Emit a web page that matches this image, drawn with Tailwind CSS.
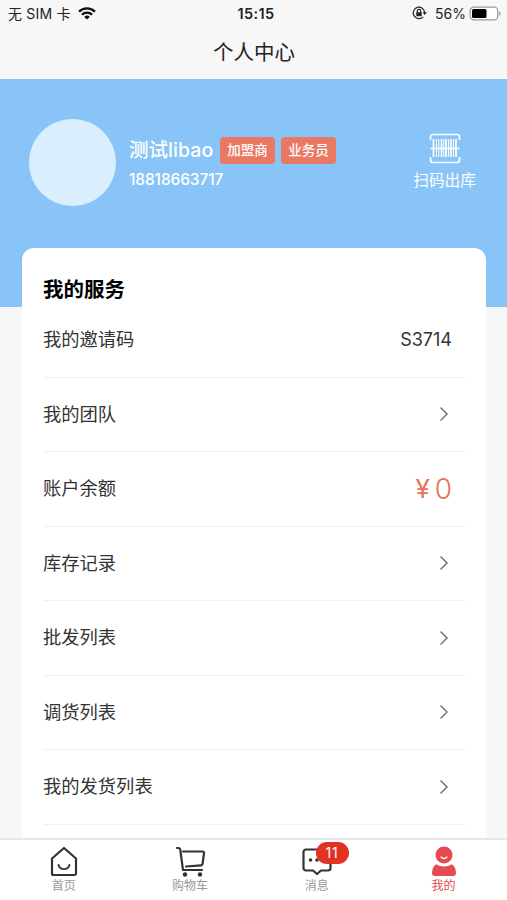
<!DOCTYPE html>
<html lang="zh-CN">
<head>
<meta charset="utf-8">
<meta name="viewport" content="width=device-width, initial-scale=1">
<title>个人中心</title>
<script src="https://cdn.jsdelivr.net/npm/@tailwindcss/browser@4"></script>
</head>
<body class="font-['Inter','Noto_Sans_CJK_SC',sans-serif] bg-[#f7f7f7] text-[#333]">
<div class="w-[507px] h-[900px] overflow-hidden flex flex-col">
  <!-- status bar -->
  <div class="h-7 shrink-0 grid grid-cols-3 items-center pl-2 pr-[5px] text-[14px] leading-7 text-[#222]">
    <div class="flex items-center gap-[7px] whitespace-nowrap">
      <span class="tracking-[0.2px]">无 SIM 卡</span>
      <svg class="w-[18px] h-[13px] -mt-[2px]" viewBox="0 0 18 13" fill="none" stroke="#111" stroke-width="2.3"><path d="M1 4.6a11.5 11.5 0 0 1 16 0M3.9 7.7a7.3 7.3 0 0 1 10.2 0"/><path d="M9 12.6 6.2 9.9a4 4 0 0 1 5.6 0z" fill="#111" stroke="none"/></svg>
    </div>
    <div class="pl-[2px] text-center font-semibold tracking-[0.4px] text-[14.5px]">15:15</div>
    <div class="flex items-center justify-end">
      <svg class="w-[15px] h-[14px] mr-[8px] -mt-[2px]" viewBox="0 0 15 14" fill="none" stroke="#222" stroke-width="1.2"><path d="M11.2 10.8A5.7 5.7 0 1 1 12.7 7"/><path d="M10.5 6.2h4.3l-2.1 2.9z" fill="#222" stroke="none"/><rect x="4.3" y="6.2" width="5.4" height="4" fill="#222" stroke="none"/><path d="M5.3 6.4V5a1.7 1.7 0 0 1 3.4 0v1.4"/></svg>
      <span>56%</span>
      <svg class="w-[33px] h-[15px] ml-[3px] -mt-[2px]" viewBox="0 0 33 15"><rect x="1.2" y="1.2" width="27.5" height="12.6" rx="3.6" fill="#fff" stroke="#999" stroke-width="1.2"/><rect x="3" y="3" width="14.5" height="9" rx="1.5" fill="#000"/><path d="M30.2 5.2c1.8.7 1.8 3.9 0 4.6z" fill="#999"/></svg>
    </div>
  </div>
  <h1 class="h-[51px] shrink-0 text-center text-[20.5px] leading-[49px] pl-px text-[#222]">个人中心</h1>

  <!-- profile -->
  <header class="h-[228px] shrink-0 bg-[#89c4f8] text-white flex items-start pl-[29px] pr-[31px]">
    <div class="mt-10 size-[87px] rounded-full bg-[#dbeefe]"></div>
    <div class="ml-[13px] mt-[58px]">
      <div class="flex items-center h-[27px]">
        <span class="text-[19.5px] font-medium leading-[27px] tracking-[0.05px] w-[91px] whitespace-nowrap">测试libao</span>
        <span class="w-[55px] h-[27px] rounded-[4px] bg-[#ea7963] text-center text-[13.5px] font-medium leading-[27px]">加盟商</span>
        <span class="ml-[6px] w-[55px] h-[27px] rounded-[4px] bg-[#ea7963] text-center text-[13.5px] font-medium leading-[27px]">业务员</span>
      </div>
      <div class="mt-[6px] text-[15.5px] leading-[20px] font-medium tracking-[-0.12px]">18818663717</div>
    </div>
    <div class="ml-auto mt-[54px] flex flex-col items-center">
      <svg class="w-8 h-[31px]" viewBox="0 0 32 31" fill="none" stroke="#fff"><path stroke-width="1.7" d="M1.5 7V4a2.5 2.5 0 0 1 2.5-2.5h24A2.5 2.5 0 0 1 30.500 4v3M1.500 24v3A2.500 2.500 0 0 0 4 29.500h24a2.500 2.500 0 0 0 2.500-2.500v-3"/><path stroke-width="1.700" d="M4.500 6v18M12.500 6v18M17 6v18M22 6v18M27 6v18"/><path stroke-width="1" d="M7.500 6v18M9.800 6v18M14.800 6v18M19.500 6v18M24.500 6v18"/><path stroke-width="1.600" d="M1.500 15.500h29"/></svg>
      <span class="mt-[6px] text-[15.7px] leading-[22px]">扫码出库</span>
    </div>
  </header>

  <!-- services -->
  <main class="relative -mt-[59px] ml-[22px] w-[464px] flex-1 min-h-0 overflow-hidden rounded-t-[12px] bg-white pl-[21px] pr-[21px] text-[18.3px]">
    <h2 class="pt-[27px] text-[20.5px] leading-[30px] font-bold text-black">我的服务</h2>
    <ul class="-mt-[2px] [&>li]:h-[74.5px] [&>li]:border-b [&>li]:border-[#f0f0f0] [&>li]:flex [&>li]:justify-between [&>li]:items-center [&>li]:pr-[13px]">
      <li><span>我的邀请码</span><span class="text-[18px]">S3714</span></li>
      <li><span>我的团队</span><svg class="w-4 h-4" viewBox="0 0 16 16" fill="none" stroke="#777" stroke-width="1.5"><path d="m4.500 1.500 6.500 6.500-6.500 6.500"/></svg></li>
      <li><span>账户余额</span><span class="flex items-center gap-[5px] text-[28px] leading-8 font-light text-[#e8735c]"><span class="text-[26px] font-normal">¥</span><span>0</span></span></li>
      <li><span>库存记录</span><svg class="w-4 h-4" viewBox="0 0 16 16" fill="none" stroke="#777" stroke-width="1.5"><path d="m4.500 1.500 6.500 6.500-6.500 6.500"/></svg></li>
      <li><span>批发列表</span><svg class="w-4 h-4" viewBox="0 0 16 16" fill="none" stroke="#777" stroke-width="1.5"><path d="m4.500 1.500 6.500 6.500-6.500 6.500"/></svg></li>
      <li><span>调货列表</span><svg class="w-4 h-4" viewBox="0 0 16 16" fill="none" stroke="#777" stroke-width="1.5"><path d="m4.500 1.500 6.500 6.500-6.500 6.500"/></svg></li>
      <li><span>我的发货列表</span><svg class="w-4 h-4" viewBox="0 0 16 16" fill="none" stroke="#777" stroke-width="1.5"><path d="m4.500 1.500 6.500 6.500-6.500 6.500"/></svg></li>
    </ul>
  </main>

  <!-- tab bar -->
  <nav class="h-[62px] shrink-0 grid grid-cols-4 border-t-2 border-[#e6e6e6] bg-white text-[12px] leading-[14px] text-[#999]">
    <div class="flex flex-col items-center pt-[5px] pl-px">
      <svg class="w-8 h-8" viewBox="0 0 32 32" fill="none" stroke="#333" stroke-width="2.200" stroke-linejoin="round" stroke-linecap="round"><path d="M16 3 4 13.500V28.500a1.500 1.500 0 0 0 1.500 1.500h21a1.500 1.500 0 0 0 1.500-1.500V13.500z"/><path d="M10.500 20c1.500 5.500 9.500 5.500 11 0" stroke-width="1.900"/></svg>
      <span class="mt-[2px]">首页</span>
    </div>
    <div class="flex flex-col items-center pt-[5px]">
      <svg class="w-8 h-8" viewBox="0 0 32 32" fill="none" stroke="#333" stroke-width="2.200" stroke-linejoin="round" stroke-linecap="round"><path d="M3 3h1.500Q6 3 6.300 5L9 25h19M9 6.500h19.500q1.800 0 1.500 2L28.500 19q-.3 1.300-1.500 1.400L12 21.500"/><circle cx="11" cy="29.500" r="2.200" fill="#333" stroke="none"/><circle cx="26" cy="29.500" r="2.200" fill="#333" stroke="none"/></svg>
      <span class="mt-[2px]">购物车</span>
    </div>
    <div class="relative flex flex-col items-center pt-[5px]">
      <svg class="w-8 h-8" viewBox="0 0 32 32" fill="none" stroke="#333" stroke-width="2.200" stroke-linejoin="round"><path d="M5 4.500h22a2.500 2.500 0 0 1 2.500 2.500v16a2.500 2.500 0 0 1-2.500 2.500h-7L16 29l-4-3.500H5A2.500 2.500 0 0 1 2.500 23V7A2.500 2.500 0 0 1 5 4.500z"/><g fill="#333" stroke="none"><circle cx="9.500" cy="15" r="1.800"/><circle cx="16" cy="15" r="1.800"/></g></svg>
      <span class="mt-[2px]">消息</span>
      <span class="absolute left-[62px] top-[2px] w-[33px] h-[22px] rounded-full bg-[#e23222] text-center text-[14px] tracking-[0.8px] leading-[22px] text-white">11</span>
    </div>
    <div class="flex flex-col items-center pt-[5px] text-[#e04a50]">
      <svg class="w-8 h-8" viewBox="0 0 32 32" fill="#e6494f"><circle cx="16" cy="10" r="8.500"/><path d="M8 19.300q8 4.500 16 0 4 3.200 4 8.700 0 3-3 3H7q-3 0-3-3 0-5.500 4-8.700z"/><path d="M13 12q3 3 6 0" fill="none" stroke="#fff" stroke-width="1.300" stroke-linecap="round"/></svg>
      <span class="mt-[2px]">我的</span>
    </div>
  </nav>
</div>
</body>
</html>
